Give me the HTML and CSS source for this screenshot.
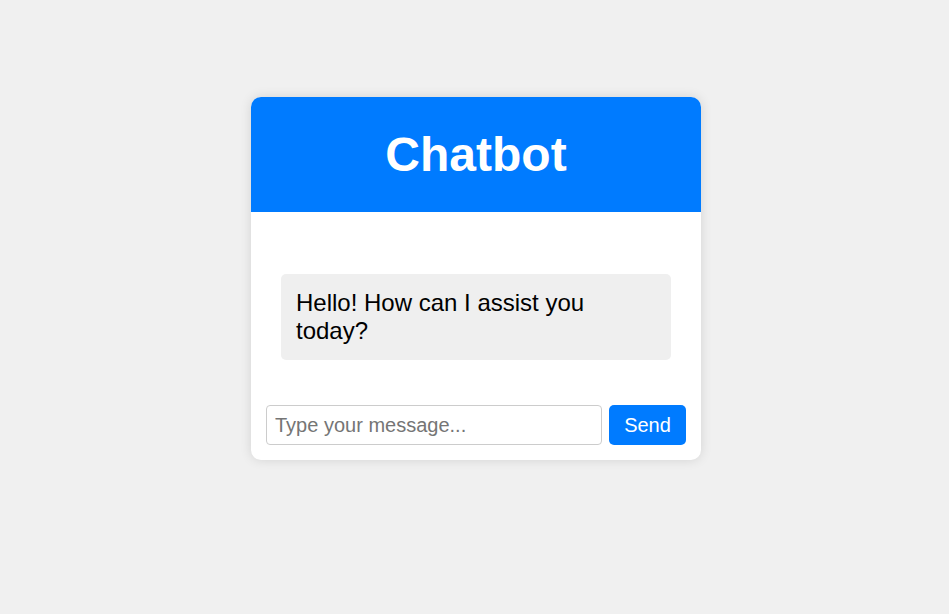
FILE: index.html
```html
<!DOCTYPE html>
<html lang="en">
<head>
<meta charset="utf-8">
<title>Chatbot</title>
<link rel="stylesheet" href="styles.css">
</head>
<body>
<div class="page">
  <div class="chat-card">
    <div class="chat-header"><h1>Chatbot</h1></div>
    <div class="chat-messages">
      <div class="message bot">Hello! How can I assist you today?</div>
    </div>
    <div class="chat-input">
      <input type="text" placeholder="Type your message...">
      <button type="button">Send</button>
    </div>
  </div>
</div>
</body>
</html>
```
FILE: styles.css
```css
* { box-sizing: border-box; }
html, body { margin: 0; padding: 0; }
body {
  background: #f0f0f0;
  font-family: "Liberation Sans", Arial, sans-serif;
}
.page {
  display: flex;
  justify-content: center;
  align-items: flex-start;
  padding: 97px 0 0 3px;
  min-height: 614px;
}
.chat-card {
  width: 450px;
  background: #fff;
  border-radius: 10px;
  box-shadow: 0 0 12px rgba(0, 0, 0, 0.12);
  overflow: hidden;
}
.chat-header {
  background: #007bff;
  color: #fff;
  text-align: center;
  padding: 30px 0;
}
.chat-header h1 {
  margin: 0;
  font-size: 48px;
  line-height: 55px;
  font-weight: bold;
}
.chat-messages {
  padding: 62px 30px 45px 30px;
}
.message {
  background: #efefef;
  border-radius: 5px;
  padding: 15px;
  font-size: 24px;
  line-height: 28px;
  color: #000;
}
.chat-input {
  display: flex;
  gap: 7px;
  padding: 0 15px 15px 15px;
}
.chat-input input {
  flex: 1;
  height: 40px;
  border: 1px solid #ccc;
  border-radius: 4px;
  padding: 0 8px;
  font-family: "Liberation Sans", Arial, sans-serif;
  font-size: 20px;
  color: #000;
  outline: none;
}
.chat-input input::placeholder { color: #757575; }
.chat-input button {
  height: 40px;
  width: 77px;
  background: #007bff;
  color: #fff;
  border: none;
  border-radius: 5px;
  font-family: "Liberation Sans", Arial, sans-serif;
  font-size: 20px;
  padding: 0;
}
```
